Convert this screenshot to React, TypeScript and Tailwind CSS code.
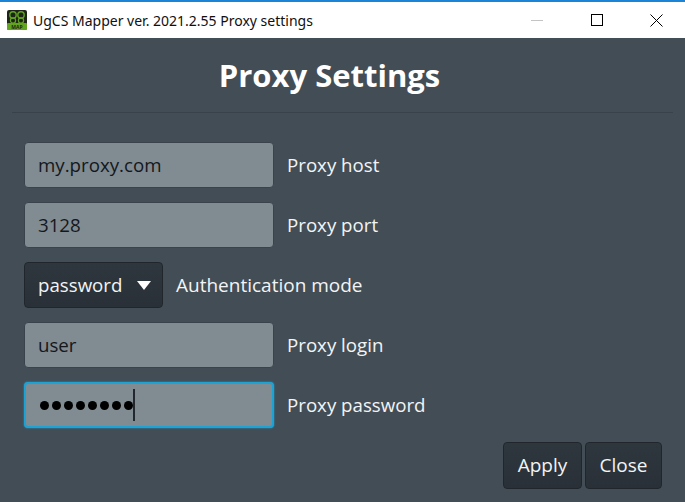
const font = "[font-family:'Open_Sans','Noto_Sans',sans-serif]";

const TextField = ({ value, label }: { value: string; label: string }) => (
  <div className="flex items-center h-[46px] gap-[13px]">
    <div className="w-[250px] h-[46px] flex items-center pl-[13px] rounded-[4px] border border-[#3a434b] bg-[#818b92] text-[18.7px]">
      <span className="text-[#14181c]">{value}</span>
    </div>
    <span className="text-[18.7px] text-[#f2f4f5]">{label}</span>
  </div>
);

export default function App() {
  return (
    <div className={`w-[685px] h-[502px] flex flex-col overflow-hidden bg-[#434d56] ${font}`}>
      <div className="h-[38px] flex items-center bg-white border-t-2 border-[#1a85d8] shrink-0">
        <svg width="20" height="20" viewBox="0 0 20 20" className="ml-[7px]">
          <rect width="20" height="20" rx="2" fill="#1d2418" />
          <rect y="13" width="20" height="7" rx="1" fill="#62a420" />
          <circle cx="6" cy="5" r="3.2" fill="none" stroke="#62a420" strokeWidth="1.4" />
          <circle cx="14" cy="5" r="3.2" fill="none" stroke="#62a420" strokeWidth="1.4" />
          <circle cx="6" cy="10.5" r="2.6" fill="none" stroke="#62a420" strokeWidth="1.2" />
          <circle cx="14" cy="10.5" r="2.6" fill="none" stroke="#62a420" strokeWidth="1.2" />
          <text x="10" y="18.5" textAnchor="middle" fontSize="5" fontWeight="700" fill="#1d2418">
            MAP
          </text>
        </svg>
        <span className="ml-[6px] text-[14px] text-[#101010] font-['Noto_Sans',sans-serif]">
          UgCS Mapper ver. 2021.2.55 Proxy settings
        </span>
        <div className="ml-auto flex items-center h-full">
          <div className="w-[46px] flex justify-center">
            <div className="w-[12px] h-px bg-[#c4c4c4]" />
          </div>
          <div className="w-[46px] ml-[14px] flex justify-center">
            <div className="w-[12px] h-[12px] border border-black" />
          </div>
          <div className="w-[46px] ml-[13px] mr-[6px] flex justify-center">
            <svg width="13" height="13" viewBox="0 0 13 13">
              <path d="M0.5 0.5L12.5 12.5M12.5 0.5L0.5 12.5" stroke="#000" strokeWidth="1" fill="none" />
            </svg>
          </div>
        </div>
      </div>

      <div className="flex-1 flex flex-col">
        <div className="h-[75px] mx-[12px] pr-[26px] flex items-center justify-center border-b border-[#39424a]">
          <h1 className="text-[31px] font-bold text-white leading-none">Proxy Settings</h1>
        </div>

        <div className="flex flex-col gap-[14px] pl-[24px] pt-[29px]">
          <TextField value="my.proxy.com" label="Proxy host" />
          <TextField value="3128" label="Proxy port" />
          <div className="flex items-center h-[46px] gap-[13px]">
            <div className="w-[139px] h-[46px] flex items-center pl-[13px] rounded-[4px] border border-[#20262b] bg-gradient-to-b from-[#2f373e] to-[#293037] text-[18.7px] text-[#f2f4f5]">
              password
              <div className="ml-[15px] w-0 h-0 border-x-[7px] border-x-transparent border-t-[9px] border-t-white" />
            </div>
            <span className="text-[19px] text-[#f2f4f5]">Authentication mode</span>
          </div>
          <TextField value="user" label="Proxy login" />
          <div className="flex items-center h-[46px] gap-[13px]">
            <div className="w-[250px] h-[46px] flex items-center pl-[14px] rounded-[4px] border-2 border-[#1ca3d6] bg-[#818b92] shadow-[0_0_2px_#1ca3d6]">
              <div className="flex gap-[3px]">
                {[0, 1, 2, 3, 4, 5, 6, 7].map((i) => (
                  <div key={i} className="w-[9px] h-[9px] rounded-full bg-black" />
                ))}
              </div>
              <div className="w-[2px] h-[32px] bg-[#22282d]" />
            </div>
            <span className="text-[18.7px] text-[#f2f4f5]">Proxy password</span>
          </div>
        </div>

        <div className="flex justify-end gap-[3px] pr-[23px] mt-[14px]">
          <button className="w-[79px] h-[47px] rounded-[4px] border border-[#20262b] bg-gradient-to-b from-[#2f373e] to-[#293037] text-[19px] text-[#f2f4f5]">
            Apply
          </button>
          <button className="w-[77px] h-[47px] rounded-[4px] border border-[#20262b] bg-gradient-to-b from-[#2f373e] to-[#293037] text-[19px] text-[#f2f4f5]">
            Close
          </button>
        </div>
      </div>
    </div>
  );
}
